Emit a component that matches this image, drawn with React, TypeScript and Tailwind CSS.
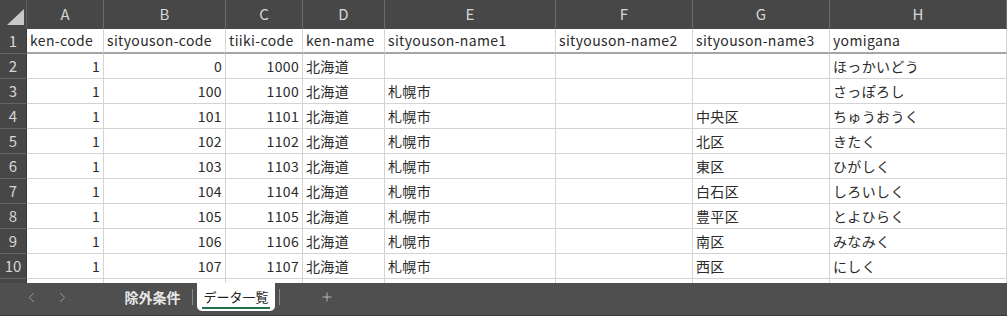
import React from 'react';
import { ChevronLeft, ChevronRight, Plus } from 'lucide-react';

const cols = [
  { key: 'A', w: 'w-[77px]' },
  { key: 'B', w: 'w-[122px]' },
  { key: 'C', w: 'w-[77px]' },
  { key: 'D', w: 'w-[82px]' },
  { key: 'E', w: 'w-[171px]' },
  { key: 'F', w: 'w-[137px]' },
  { key: 'G', w: 'w-[137px]' },
  { key: 'H', w: 'w-[177px]' },
];

const header = ['ken-code', 'sityouson-code', 'tiiki-code', 'ken-name', 'sityouson-name1', 'sityouson-name2', 'sityouson-name3', 'yomigana'];

const rows: (string | number)[][] = [
  [1, 0, 1000, '北海道', '', '', '', 'ほっかいどう'],
  [1, 100, 1100, '北海道', '札幌市', '', '', 'さっぽろし'],
  [1, 101, 1101, '北海道', '札幌市', '', '中央区', 'ちゅうおうく'],
  [1, 102, 1102, '北海道', '札幌市', '', '北区', 'きたく'],
  [1, 103, 1103, '北海道', '札幌市', '', '東区', 'ひがしく'],
  [1, 104, 1104, '北海道', '札幌市', '', '白石区', 'しろいしく'],
  [1, 105, 1105, '北海道', '札幌市', '', '豊平区', 'とよひらく'],
  [1, 106, 1106, '北海道', '札幌市', '', '南区', 'みなみく'],
  [1, 107, 1107, '北海道', '札幌市', '', '西区', 'にしく'],
];

const font = "font-['Noto_Sans_CJK_JP','Noto_Sans',sans-serif]";

function Cell({ w, children, right, thick }: { w: string; children?: React.ReactNode; right?: boolean; thick?: boolean }) {
  return (
    <div
      className={`${w} shrink-0 h-full border-r border-[#d4d4d4] ${thick ? 'border-b-2 border-b-[#a6a6a6]' : 'border-b border-b-[#d4d4d4]'} flex items-center px-[3px] whitespace-nowrap overflow-hidden text-[14px] tracking-[0.35px] text-[#2b2b2b] ${right ? 'justify-end' : ''}`}
    >
      {children}
    </div>
  );
}

function RowHead({ n }: { n: React.ReactNode }) {
  return (
    <div className="w-[27px] shrink-0 h-[25px] bg-[#474747] border-b border-[#666] border-r border-r-[#3a3a3a] flex items-center justify-center text-[15px] text-[#d6d6d6]">
      {n}
    </div>
  );
}

export default function App() {
  return (
    <div className={`w-[1007px] h-[316px] overflow-hidden bg-white flex flex-col ${font}`}>
      {/* column headers */}
      <div className="flex h-[29px] shrink-0 bg-[#474747]">
        <div className="w-[27px] shrink-0 h-full border-r border-[#5e5e5e] relative">
          <svg width="27" height="29" className="absolute inset-0">
            <polygon points="7,25 24,25 24,9" fill="#c8c8c8" />
          </svg>
        </div>
        {cols.map((c) => (
          <div key={c.key} className={`${c.w} shrink-0 h-full border-r border-[#6a6a6a] flex items-center justify-center text-[15px] text-[#d6d6d6]`}>
            {c.key}
          </div>
        ))}
      </div>

      {/* row 1 */}
      <div className="flex h-[25px] shrink-0">
        <RowHead n={1} />
        {cols.map((c, i) => (
          <Cell key={c.key} w={c.w} thick>
            {header[i]}
          </Cell>
        ))}
      </div>

      {rows.map((r, ri) => (
        <div key={ri} className="flex h-[25px] shrink-0">
          <RowHead n={ri + 2} />
          {cols.map((c, i) => (
            <Cell key={c.key} w={c.w} right={typeof r[i] === 'number'}>
              {r[i]}
            </Cell>
          ))}
        </div>
      ))}

      {/* partial row 11 */}
      <div className="flex h-[4px] shrink-0">
        <div className="w-[27px] shrink-0 h-full bg-[#474747] border-r border-[#3a3a3a]" />
        {cols.map((c) => (
          <div key={c.key} className={`${c.w} shrink-0 h-full border-r border-[#d4d4d4]`} />
        ))}
      </div>

      {/* sheet tabs */}
      <div className="flex-1 bg-[#4f4f4f] border-b border-[#3a3a3a] flex items-start">
        <div className="w-[110px] shrink-0 h-[28px] flex items-center text-[#9a9a9a]">
          <ChevronLeft size={17} strokeWidth={1.4} className="ml-[23px]" />
          <ChevronRight size={17} strokeWidth={1.4} className="ml-[14px]" />
        </div>
        <div className="w-[82px] shrink-0 h-[28px] flex items-center justify-center text-[14px] font-bold text-[#e8e8e8] pl-[3px]">
          除外条件
        </div>
        <div className="w-px h-[16px] mt-[6px] bg-[#8a8a8a]" />
        <div className="ml-[4px] w-[78px] shrink-0 h-[28px] bg-white rounded-b-[5px] flex items-center justify-center">
          <span className="text-[13px] text-[#222] border-b-2 border-[#1e7145] leading-[20px] mt-[2px] px-[1px]">データ一覧</span>
        </div>
        <div className="ml-[4px] w-px h-[16px] mt-[6px] bg-[#8a8a8a]" />
        <div className="ml-[40px] h-[28px] flex items-center text-[#c4c4c4]">
          <Plus size={14} strokeWidth={1.5} />
        </div>
      </div>
    </div>
  );
}
